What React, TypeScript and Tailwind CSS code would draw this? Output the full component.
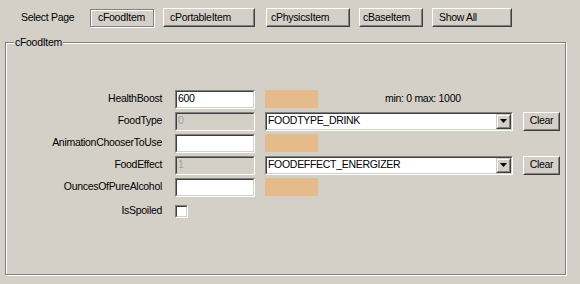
import React from "react";

const font = { fontFamily: '"Liberation Sans", Arial, sans-serif' };
const txt = "text-[10.5px] tracking-[-0.3px]";

function RaisedButton({ w, children, pressed, pl }: { w: string; children: React.ReactNode; pressed?: boolean; pl?: string }) {
  const align = pl ? `justify-start ${pl}` : "justify-center";
  if (pressed) {
    return (
      <div className={`${w} h-[18px] border border-[#808080] shadow-[inset_1px_1px_0_#fff,1px_1px_0_#fff] flex items-center ${align} ${txt} text-black`}>
        {children}
      </div>
    );
  }
  return (
    <div className={`${w} h-[19px] border border-t-white border-l-white border-r-[#404040] border-b-[#404040] bg-[#d4d0c8]`}>
      <div className={`w-full h-full border border-transparent border-r-[#808080] border-b-[#808080] flex items-center ${align} ${txt} text-black`}>
        {children}
      </div>
    </div>
  );
}

function Sunken({ w, h, bg, children }: { w: string; h: string; bg: string; children?: React.ReactNode }) {
  return (
    <div className={`${w} ${h} border border-t-[#808080] border-l-[#808080] border-r-white border-b-white`}>
      <div className={`w-full h-full border border-t-[#404040] border-l-[#404040] border-r-[#d4d0c8] border-b-[#d4d0c8] ${bg} flex items-center`}>
        {children}
      </div>
    </div>
  );
}

function TextBox({ value, disabled }: { value?: string; disabled?: boolean }) {
  return (
    <Sunken w="w-[80px]" h="h-[19px]" bg={disabled ? "bg-[#d4d0c8]" : "bg-white"}>
      <span className={`pl-[1px] ${txt} ${disabled ? "text-[#a0a0a0]" : "text-black"}`}>{value}</span>
    </Sunken>
  );
}

function Swatch() {
  return <div className="w-[53px] h-[18px] bg-[#e6bb8c]" />;
}

function Select({ value }: { value: string }) {
  return (
    <Sunken w="w-[248px]" h="h-[19px]" bg="bg-white">
      <span className={`pl-[1px] ${txt} text-black flex-1`}>{value}</span>
      <div className="w-[15px] h-[15px] border border-t-[#d4d0c8] border-l-[#d4d0c8] border-r-[#404040] border-b-[#404040] bg-[#d4d0c8]">
        <div className="w-full h-full border border-t-white border-l-white border-r-[#808080] border-b-[#808080] flex items-center justify-center">
          <svg width="7" height="4" viewBox="0 0 7 4">
            <path d="M0 0H7L3.5 4Z" fill="#000" />
          </svg>
        </div>
      </div>
    </Sunken>
  );
}

function Row({ label, children }: { label: string; children: React.ReactNode }) {
  return (
    <div className="flex items-center h-[22px]">
      <div className={`w-[156px] text-right ${txt} text-black`}>{label}</div>
      <div className="ml-[13px] flex items-center">{children}</div>
    </div>
  );
}

export default function App() {
  return (
    <div className="w-[580px] h-[284px] bg-[#d4d0c8] overflow-hidden" style={font}>
      <div className="flex items-center h-[34px] pt-[1px]">
        <div className={`ml-[21px] w-[69px] ${txt} text-black`}>Select Page</div>
        <div className="flex items-center gap-[9px]">
          <RaisedButton w="w-[64px]" pressed pl="pl-[7px]">cFoodItem</RaisedButton>
          <RaisedButton w="w-[92px]" pl="pl-[5px]">cPortableItem</RaisedButton>
          <div className="ml-[2px]">
            <RaisedButton w="w-[84px]" pl="pl-[3px]">cPhysicsItem</RaisedButton>
          </div>
          <RaisedButton w="w-[64px]" pl="pl-[2px]">cBaseItem</RaisedButton>
          <RaisedButton w="w-[80px]" pl="pl-[5px]">Show All</RaisedButton>
        </div>
      </div>
      <div className="relative ml-[5px] mt-[8px] w-[561px] h-[233px] border border-[#808080] shadow-[inset_1px_1px_0_#fff,1px_1px_0_#fff]">
        <span className={`absolute left-[8px] top-[-8px] px-[1px] bg-[#d4d0c8] ${txt} text-black leading-[14px]`}>cFoodItem</span>
        <div className="pt-[45px] flex flex-col">
          <Row label="HealthBoost">
            <TextBox value="600" />
            <div className="ml-[10px]"><Swatch /></div>
            <div className={`ml-[67px] ${txt} text-black`}>min: 0 max: 1000</div>
          </Row>
          <Row label="FoodType">
            <TextBox value="0" disabled />
            <div className="ml-[10px]"><Select value="FOODTYPE_DRINK" /></div>
            <div className="ml-[10px]"><RaisedButton w="w-[37px]">Clear</RaisedButton></div>
          </Row>
          <Row label="AnimationChooserToUse">
            <TextBox />
            <div className="ml-[10px]"><Swatch /></div>
          </Row>
          <Row label="FoodEffect">
            <TextBox value="1" disabled />
            <div className="ml-[10px]"><Select value="FOODEFFECT_ENERGIZER" /></div>
            <div className="ml-[10px]"><RaisedButton w="w-[37px]">Clear</RaisedButton></div>
          </Row>
          <Row label="OuncesOfPureAlcohol">
            <TextBox />
            <div className="ml-[10px]"><Swatch /></div>
          </Row>
          <div className="flex items-center h-[24px] pt-[2px]">
            <div className={`w-[156px] text-right ${txt} text-black`}>IsSpoiled</div>
            <div className="ml-[13px]">
              <Sunken w="w-[13px]" h="h-[13px]" bg="bg-white" />
            </div>
          </div>
        </div>
      </div>
    </div>
  );
}
